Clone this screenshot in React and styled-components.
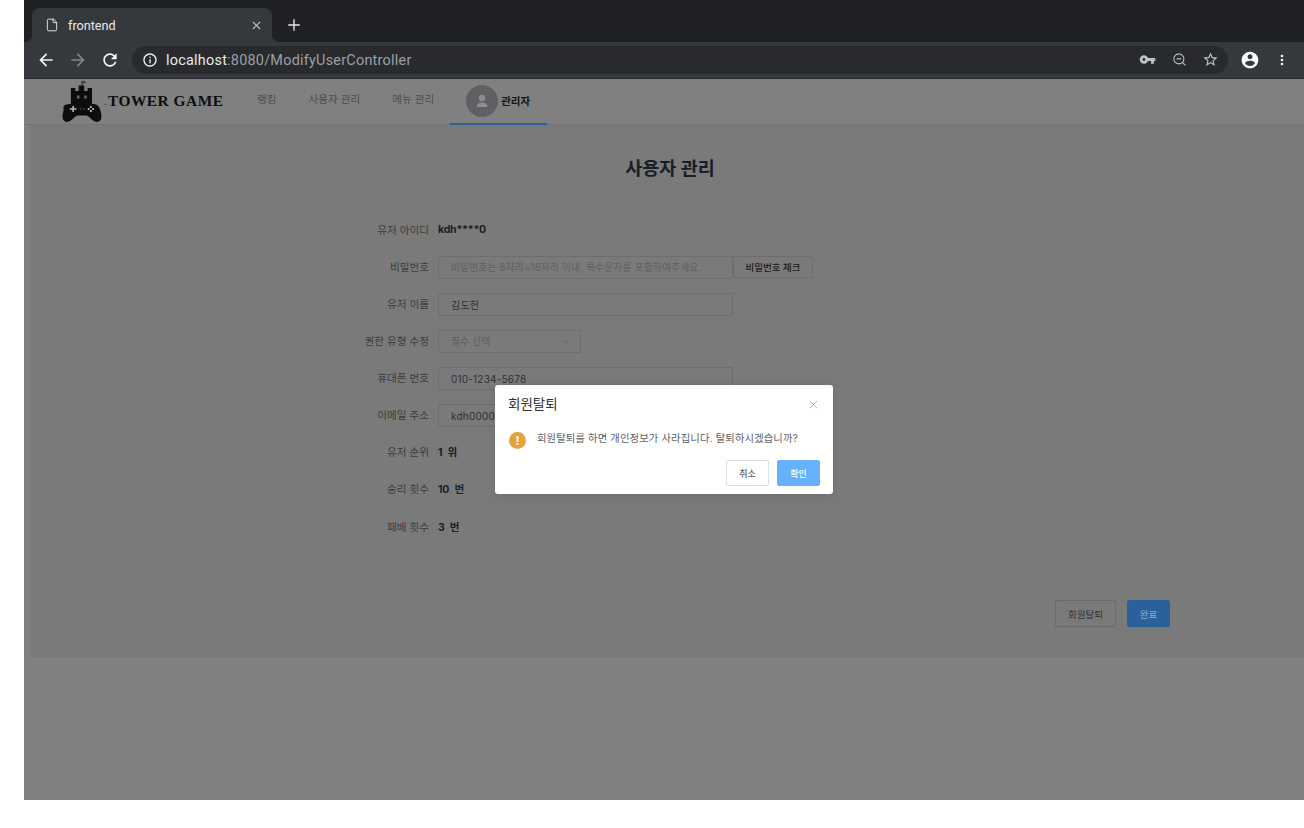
import React from 'react';
import styled, { createGlobalStyle } from 'styled-components';
import { File, X, Plus, ZoomOut, ChevronDown } from 'lucide-react';

const KR_FONT = `Inter, "Noto Sans CJK KR", sans-serif`;

const GlobalStyle = createGlobalStyle`
  html, body { margin: 0; background: #fff; }
  * { box-sizing: border-box; }
`;

// Browser frame
const Frame = styled.div`
  margin-left: 24px;
  width: 1280px;
  height: 800px;
  display: flex;
  flex-direction: column;
  overflow: hidden;
  font-family: ${KR_FONT};
`;

const TabStrip = styled.div`
  height: 42px;
  background: #202124;
  display: flex;
  align-items: flex-end;
  padding-left: 8px;
  flex: none;
`;

const Tab = styled.div`
  width: 240px;
  height: 34px;
  background: #35383c;
  border-radius: 8px 8px 0 0;
  display: flex;
  align-items: center;
  padding: 0 9px 0 13px;
  color: #e8eaed;
  font: 12.6px Roboto, sans-serif;
  position: relative;

  svg { flex: none; }
  span { margin-left: 9px; flex: 1; }

  &::before, &::after {
    content: '';
    position: absolute;
    bottom: 0;
    width: 8px;
    height: 8px;
  }
  &::before { left: -8px; background: radial-gradient(circle at 0 0, #202124 8px, #35383c 8.5px); }
  &::after { right: -8px; background: radial-gradient(circle at 100% 0, #202124 8px, #35383c 8.5px); }
`;

const NewTab = styled.div`
  margin: 0 0 8px 13px;
  color: #e8eaed;
  display: flex;
`;

const Toolbar = styled.div`
  height: 37px;
  background: #35383c;
  border-bottom: 1px solid #26282b;
  display: flex;
  align-items: center;
  padding: 0 12px 1px 12px;
  flex: none;
`;

const NavIcon = styled.svg`
  width: 20px;
  height: 20px;
  fill: ${(p) => p.$color || '#f1f3f4'};
  flex: none;
  margin-right: ${(p) => p.$gap || 0}px;
`;

const Omnibox = styled.div`
  width: 1096px;
  height: 28px;
  margin: 0 12px;
  background: #282a2d;
  border-radius: 14px;
  display: flex;
  align-items: center;
  padding: 0 9px 0 10px;
  font: 14.4px Roboto, sans-serif;
  color: #9aa0a6;
`;

const Url = styled.div`
  flex: 1;
  margin-left: 8px;
  padding-top: 1px;
  letter-spacing: 0.25px;
  b { font-weight: 400; color: #e8eaed; }
`;

// App page
const Page = styled.div`
  flex: 1;
  position: relative;
  background: #808080;
`;

const Header = styled.header`
  height: 46px;
  display: flex;
  align-items: stretch;
  padding-left: 38px;
  border-bottom: 1px solid #757575;
`;

const Logo = styled.div`
  width: 162px;
  display: flex;
  align-items: flex-start;
  padding-top: 2px;
  margin-right: 33px;
`;

const LogoText = styled.span`
  font: bold 15.4px "Liberation Serif", serif;
  color: #0d0d0d;
  margin: 11px 0 0 1px;
  white-space: nowrap;
  letter-spacing: 0.5px;
`;

const MenuItem = styled.div`
  font-size: 10.6px;
  color: #4d4d4d;
  padding-top: 12px;
  margin-right: 32px;
`;

const UserTab = styled.div`
  width: 97px;
  margin: 0 0 -1px -16px;
  height: 46px;
  border-bottom: 2px solid #2a5f9c;
  display: flex;
  align-items: flex-start;
  padding: 6px 0 0 16px;
  font-size: 10.5px;
  font-weight: 700;
  color: #161616;

  span { margin: 8px 0 0 3px; }
`;

const Avatar = styled.div`
  width: 32px;
  height: 32px;
  border-radius: 50%;
  background: #5f6063;
  display: flex;
  align-items: center;
  justify-content: center;
`;

const Panel = styled.main`
  margin-left: 6px;
  height: 532px;
  background: #7a7a7a;
  padding: 30px 134px 0 0;
  display: flex;
  flex-direction: column;
`;

const Title = styled.h2`
  margin: 0 0 29.5px;
  padding-left: 140px;
  text-align: center;
  font-size: 18.5px;
  line-height: 26px;
  font-weight: 700;
  color: #161f28;
`;

const Form = styled.div`
  padding-left: 299px;
  height: 389.5px;
`;

const Row = styled.div`
  height: 37.125px;
  display: flex;
  align-items: center;
`;

const Label = styled.label`
  width: 100px;
  margin-right: 9px;
  text-align: right;
  font-size: 10.6px;
  color: #3c3c3e;
`;

const Value = styled.div`
  font-size: 10.5px;
  font-weight: 700;
  letter-spacing: -0.2px;
  word-spacing: 3px;
  color: #161f28;
`;

const Field = styled.div`
  width: ${(p) => p.$width || 295}px;
  height: 23px;
  margin-top: 2px;
  border: 1px solid #6e6e6e;
  border-radius: 2px;
  display: flex;
  align-items: center;
  justify-content: space-between;
  padding: 0 12px;
  font-size: ${(p) => (p.$muted ? 9.7 : 10)}px;
  letter-spacing: 0.2px;
  color: ${(p) => (p.$muted ? '#606060' : '#303133')};
  white-space: nowrap;
  overflow: hidden;

  svg { margin-right: -4px; }
`;

const CheckButton = styled.div`
  width: 80px;
  height: 22px;
  margin-top: 2px;
  border: 1px solid #6e6e6e;
  border-radius: 2px;
  display: flex;
  align-items: center;
  justify-content: center;
  font-size: 9.5px;
  font-weight: 500;
  color: #1c1c1c;
`;

const Actions = styled.div`
  display: flex;
  justify-content: flex-end;
  gap: 11px;
`;

const ActionButton = styled.div`
  width: ${(p) => (p.$primary ? 43 : 61)}px;
  height: 27px;
  border: 1px solid ${(p) => (p.$primary ? '#2a619b' : '#6a6a6a')};
  border-radius: 2px;
  background: ${(p) => (p.$primary ? '#2a619b' : 'transparent')};
  color: ${(p) => (p.$primary ? '#8fa9c8' : '#303133')};
  display: flex;
  align-items: center;
  justify-content: center;
  font-size: 9.5px;
`;

// Confirm dialog, sits over the dimmed page
const Overlay = styled.div`
  position: absolute;
  inset: 0;
  display: flex;
  justify-content: center;
  align-items: flex-start;
  padding-top: 306px;
`;

const Dialog = styled.div`
  width: 338px;
  height: 109px;
  background: #fff;
  border-radius: 3px;
  box-shadow: 0 2px 12px rgba(0, 0, 0, 0.1);
  padding: 10px 13px 0;
`;

const DialogHead = styled.div`
  display: flex;
  justify-content: space-between;
  align-items: center;
  font-size: 13.5px;
  line-height: 18px;
  color: #303133;
  font-weight: 400;
  svg { color: #909399; }
`;

const DialogBody = styled.div`
  display: flex;
  align-items: center;
  margin-top: 17px;
  font-size: 10.3px;
  color: #606266;
  letter-spacing: 0.14px;

  span { padding-bottom: 5px; }
`;

const WarnIcon = styled.div`
  width: 17px;
  height: 17px;
  margin: 0 11px 0 1px;
  border-radius: 50%;
  background: #e6a23c;
  color: #fff;
  font-size: 12px;
  font-weight: 700;
  display: flex;
  align-items: center;
  justify-content: center;
`;

const DialogFoot = styled.div`
  display: flex;
  justify-content: flex-end;
  gap: 8px;
  margin-top: 10px;
`;

const DialogButton = styled.div`
  width: 43px;
  height: 26px;
  border: 1px solid ${(p) => (p.$primary ? '#66b1ff' : '#dcdfe6')};
  border-radius: 2px;
  background: ${(p) => (p.$primary ? '#66b1ff' : '#fff')};
  color: ${(p) => (p.$primary ? '#fff' : '#606266')};
  font-size: 9px;
  font-weight: 500;
  display: flex;
  align-items: center;
  justify-content: center;
`;

const TowerLogo = () => (
  <svg width="45" height="41" viewBox="3 0 40.5 41" preserveAspectRatio="none" style={{ flex: 'none' }}>
    <path d="M21 0v5M21 0l3 1.2-3 1.2" stroke="#222" strokeWidth="0.8" fill="none" />
    <path
      fill="#0d0d0d"
      d="M11 7h4v3h3V4.500h5V10h3V7h4v16c4 0 6 1 7.5 6 1 4.500 1.500 7 .5 9.500-1.500 3-4.500 3-7 1-3-2.500-4-5-7-5h-6c-3 0-4 2.500-7 5-2.500 2-5.500 2-7-1-1-2.500-.5-5 .5-9.500C3.500 24 6 23 11 23z"
    />
    <rect x="16.500" y="14.500" width="2.200" height="3" fill="#6a6a6a" />
    <rect x="23" y="14.500" width="2.200" height="3" fill="#6a6a6a" />
    <path d="M10 28h6M13 25v6" stroke="#bbb" strokeWidth="1.400" />
    <path d="M19 28h1.500M22 28h1.500" stroke="#777" strokeWidth="0.8" />
    <circle cx="27" cy="28" r="1" fill="#bbb" />
    <circle cx="31" cy="28" r="1" fill="#bbb" />
    <circle cx="29" cy="26" r="1" fill="#bbb" />
    <circle cx="29" cy="30" r="1" fill="#bbb" />
    <path d="M40.500 23.500h3" stroke="#555" strokeWidth="0.7" />
  </svg>
);

function App() {
  return (
    <>
      <GlobalStyle />
      <Frame>
        <TabStrip>
          <Tab>
            <File size={14} strokeWidth={1.6} />
            <span>frontend</span>
            <X size={13} strokeWidth={2} color="#bdc1c6" />
          </Tab>
          <NewTab>
            <Plus size={18} strokeWidth={1.8} />
          </NewTab>
        </TabStrip>

        <Toolbar>
          <NavIcon viewBox="0 0 24 24" $gap={12}>
            <path d="M20 11H7.830l5.590-5.590L12 4l-8 8 8 8 1.410-1.410L7.830 13H20v-2z" />
          </NavIcon>
          <NavIcon viewBox="0 0 24 24" $gap={12} $color="#80868b">
            <path d="M12 4l-1.410 1.410L16.170 11H4v2h12.170l-5.580 5.590L12 20l8-8z" />
          </NavIcon>
          <NavIcon viewBox="0 0 24 24">
            <path d="M17.650 6.350C16.200 4.900 14.210 4 12 4c-4.420 0-7.990 3.580-7.990 8s3.570 8 7.990 8c3.730 0 6.840-2.550 7.730-6h-2.080c-.82 2.330-3.040 4-5.650 4-3.310 0-6-2.690-6-6s2.690-6 6-6c1.660 0 3.140.69 4.220 1.780L13 11h7V4l-2.350 2.350z" />
          </NavIcon>
          <Omnibox>
            <NavIcon viewBox="0 0 24 24" style={{ width: 16, height: 16 }}>
              <path d="M11 7h2v2h-2zm0 4h2v6h-2zm1-9C6.480 2 2 6.480 2 12s4.480 10 10 10 10-4.480 10-10S17.520 2 12 2zm0 18c-4.410 0-8-3.590-8-8s3.590-8 8-8 8 3.590 8 8-3.590 8-8 8z" />
            </NavIcon>
            <Url>
              <b>localhost</b>:8080/ModifyUserController
            </Url>
            <NavIcon viewBox="0 0 24 24" $gap={16} $color="#bdc1c6" style={{ width: 17, height: 17 }}>
              <path d="M12.650 10C11.830 7.670 9.610 6 7 6c-3.310 0-6 2.690-6 6s2.690 6 6 6c2.610 0 4.830-1.670 5.650-4H17v4h4v-4h2v-4H12.650zM7 14c-1.100 0-2-.9-2-2s.9-2 2-2 2 .9 2 2-.9 2-2 2z" />
            </NavIcon>
            <ZoomOut size={15} color="#bdc1c6" strokeWidth={1.7} style={{ marginRight: 15 }} />
            <NavIcon viewBox="0 0 24 24" $color="#bdc1c6" style={{ width: 17, height: 17 }}>
              <path d="M22 9.240l-7.190-.62L12 2 9.190 8.630 2 9.240l5.460 4.730L5.820 21 12 17.270 18.180 21l-1.630-7.030L22 9.240zM12 15.400l-3.760 2.270 1-4.280-3.320-2.880 4.380-.38L12 6.100l1.710 4.040 4.380.38-3.320 2.880 1 4.280L12 15.400z" />
            </NavIcon>
          </Omnibox>
          <NavIcon viewBox="0 0 24 24" $gap={14} $color="#fff">
            <path d="M12 2C6.480 2 2 6.480 2 12s4.480 10 10 10 10-4.480 10-10S17.520 2 12 2zm0 3c1.660 0 3 1.340 3 3s-1.340 3-3 3-3-1.340-3-3 1.340-3 3-3zm0 14.200c-2.500 0-4.710-1.280-6-3.220.03-1.990 4-3.080 6-3.080 1.990 0 5.970 1.090 6 3.080-1.290 1.940-3.500 3.220-6 3.220z" />
          </NavIcon>
          <NavIcon viewBox="0 0 24 24" style={{ width: 16, height: 16 }} $color="#f1f3f4">
            <path d="M12 8a2 2 0 1 0 0-4 2 2 0 0 0 0 4zm0 2a2 2 0 1 0 0 4 2 2 0 0 0 0-4zm0 6a2 2 0 1 0 0 4 2 2 0 0 0 0-4z" />
          </NavIcon>
        </Toolbar>

        <Page>
          <Header>
            <Logo>
              <TowerLogo />
              <LogoText>TOWER GAME</LogoText>
            </Logo>
            <MenuItem>랭킹</MenuItem>
            <MenuItem>사용자 관리</MenuItem>
            <MenuItem>메뉴 관리</MenuItem>
            <UserTab>
              <Avatar>
                <svg width="16" height="16" viewBox="0 0 16 16" fill="#8e8e8e">
                  <circle cx="8" cy="5" r="3.200" />
                  <path d="M2.500 14c0-3 2.500-4.500 5.500-4.500s5.500 1.500 5.500 4.500z" />
                </svg>
              </Avatar>
              <span>관리자</span>
            </UserTab>
          </Header>

          <Panel>
            <Title>사용자 관리</Title>
            <Form>
              <Row>
                <Label>유저 아이디</Label>
                <Value>kdh****0</Value>
              </Row>
              <Row>
                <Label>비밀번호</Label>
                <Field $muted>비밀번호는 8자리~16자리 이내, 특수문자를 포함하여주세요.</Field>
                <CheckButton>비밀번호 체크</CheckButton>
              </Row>
              <Row>
                <Label>유저 이름</Label>
                <Field>김도헌</Field>
              </Row>
              <Row>
                <Label>권한 유형 수정</Label>
                <Field $muted $width={143}>
                  필수 선택
                  <ChevronDown size={13} strokeWidth={1.2} color="#5a5a5a" />
                </Field>
              </Row>
              <Row>
                <Label>휴대폰 번호</Label>
                <Field>010-1234-5678</Field>
              </Row>
              <Row>
                <Label>이메일 주소</Label>
                <Field>kdh0000@naver.com</Field>
              </Row>
              <Row>
                <Label>유저 순위</Label>
                <Value>1 위</Value>
              </Row>
              <Row>
                <Label>승리 횟수</Label>
                <Value>10 번</Value>
              </Row>
              <Row>
                <Label>패배 횟수</Label>
                <Value>3 번</Value>
              </Row>
            </Form>
            <Actions>
              <ActionButton>회원탈퇴</ActionButton>
              <ActionButton $primary>완료</ActionButton>
            </Actions>
          </Panel>

          <Overlay>
            <Dialog>
              <DialogHead>
                회원탈퇴
                <X size={13} strokeWidth={1.2} />
              </DialogHead>
              <DialogBody>
                <WarnIcon>!</WarnIcon>
                <span>회원탈퇴를 하면 개인정보가 사라집니다. 탈퇴하시겠습니까?</span>
              </DialogBody>
              <DialogFoot>
                <DialogButton>취소</DialogButton>
                <DialogButton $primary>확인</DialogButton>
              </DialogFoot>
            </Dialog>
          </Overlay>
        </Page>
      </Frame>
    </>
  );
}

export default App;
